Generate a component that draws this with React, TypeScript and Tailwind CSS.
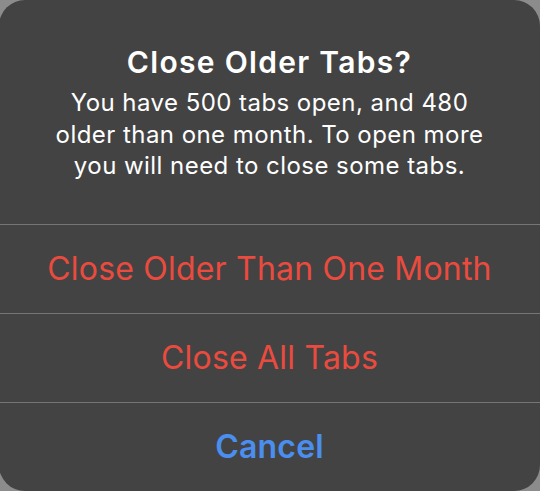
import React from "react";

const font = { fontFamily: "Inter, 'Noto Sans', sans-serif" };

export default function App() {
  const actions = [
    { label: "Close Older Than One Month", cls: "text-[#eb4b3f] font-normal" },
    { label: "Close All Tabs", cls: "text-[#eb4b3f] font-normal" },
    { label: "Cancel", cls: "text-[#4a8ef0] font-semibold" },
  ];

  return (
    <div className="w-[540px] h-[491px] bg-[#8c8c8c] overflow-hidden" style={font}>
      <div className="w-[541px] h-[491px] -ml-[1px] bg-[#434343] rounded-[26px] flex flex-col">
        <div className="h-[224px] flex flex-col items-center pt-[44px] text-white text-center">
          <h1 className="text-[30px] leading-[36px] font-semibold tracking-[1.3px]">Close Older Tabs?</h1>
          <p className="mt-[7px] text-[24px] leading-[31.5px] tracking-[0.45px]">
            You have 500 tabs open, and 480
            <br />
            older than one month. To open more
            <br />
            you will need to close some tabs.
          </p>
        </div>
        {actions.map((a, i) => (
          <div key={i} className="border-t border-[#767676] h-[89px] flex items-center justify-center">
            <span className={`text-[32px] tracking-[0.2px] ${a.cls}`}>{a.label}</span>
          </div>
        ))}
      </div>
    </div>
  );
}
